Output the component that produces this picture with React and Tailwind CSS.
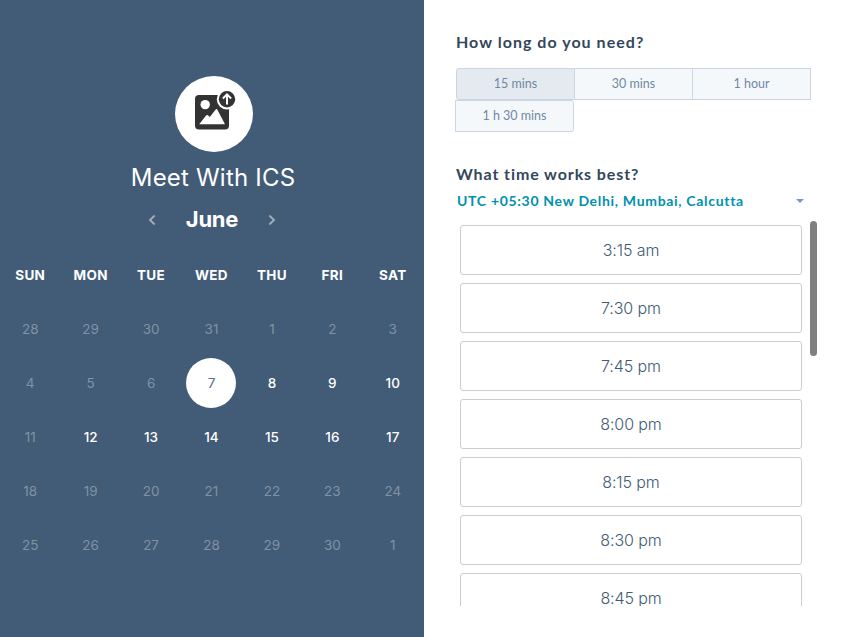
import React from "react";

const WEEKDAYS = ["SUN", "MON", "TUE", "WED", "THU", "FRI", "SAT"];

const DAYS = [
  28, 29, 30, 31, 1, 2, 3,
  4, 5, 6, 7, 8, 9, 10,
  11, 12, 13, 14, 15, 16, 17,
  18, 19, 20, 21, 22, 23, 24,
  25, 26, 27, 28, 29, 30, 1,
];
const SELECTED = 10;
const OPEN = [11, 12, 13, 15, 16, 17, 18, 19, 20];

const TIMES = ["3:15 am", "7:30 pm", "7:45 pm", "8:00 pm", "8:15 pm", "8:30 pm", "8:45 pm"];

function dayClass(i) {
  if (i === SELECTED) return "bg-white text-[#516f90]";
  if (OPEN.includes(i)) return "text-white font-medium";
  return "text-[#8192a4]";
}

function UploadImageIcon() {
  return (
    <svg width="42" height="42" viewBox="0 0 42 42" fill="none">
      <rect x="1" y="5" width="34" height="34.5" rx="4" fill="#333333" />
      <circle cx="11.2" cy="14.6" r="4.7" fill="white" />
      <path d="M5.2 34.2L12.3 25.3Q13 24.5 13.9 25.3L15.8 27L21.7 19.5Q22.6 18.6 23.4 19.8L31 34.2Z" fill="white" />
      <circle cx="33" cy="9.2" r="10.2" fill="white" />
      <circle cx="33" cy="9.2" r="8.2" fill="#333333" />
      <path d="M33 14.5V4.7M28.9 8.5L33 4.4L37.1 8.5" stroke="white" strokeWidth="2" />
    </svg>
  );
}

function Calendar() {
  return (
    <section className="flex h-full w-[424px] shrink-0 flex-col items-center bg-[#425b76] pt-[76px]">
      <div className="mr-[-4px] flex h-[76px] w-[78px] items-center justify-center rounded-[50%] bg-white">
        <div className="mb-[6px] ml-[1px] h-[42px] w-[42px]">
          <UploadImageIcon />
        </div>
      </div>
      <h1 className="mt-2 ml-[2px] whitespace-nowrap text-[24px] leading-[36px] tracking-[0.2px] text-white">Meet With ICS</h1>
      <div className="mt-[7px] flex h-8 items-center">
        <svg className="mt-px" width="8" height="12" viewBox="0 0 8 12" fill="none" stroke="#a0adba" strokeWidth="1.9">
          <path d="M6.7 1.5L2 6L6.7 10.5" />
        </svg>
        <h2 className="w-[112px] text-center text-[22px] leading-8 font-bold tracking-[-0.2px] text-white">June</h2>
        <svg className="mt-px" width="8" height="12" viewBox="0 0 8 12" fill="none" stroke="#a0adba" strokeWidth="1.9">
          <path d="M1.3 1.5L6 6L1.3 10.5" />
        </svg>
      </div>
      <div className="mt-[13px] grid w-[423px] grid-cols-7 self-start text-center text-[13.5px] leading-[54px] font-bold tracking-[0.3px] text-white">
        {WEEKDAYS.map((d) => <div key={d}>{d}</div>)}
      </div>
      <div className="grid w-[423px] grid-cols-7 self-start">
        {DAYS.map((d, i) => (
          <div key={i} className="flex h-[54px] items-center justify-center">
            <div className={"flex h-[50px] w-[50px] items-center justify-center rounded-full text-[13.5px] " + dayClass(i)}>{d}</div>
          </div>
        ))}
      </div>
    </section>
  );
}

function Durations() {
  return (
    <div className="mt-[15px] text-center font-['Lato',sans-serif] text-[12.5px] leading-[30px] text-[#6f88a6]">
      <div className="flex">
        <div className="w-[119px] rounded-l-[3px] border border-[#cbd6e2] bg-[#e5eaf0]">15 mins</div>
        <div className="w-[118px] border-y border-r border-[#cbd6e2] bg-[#f5f8fa]">30 mins</div>
        <div className="w-[118px] border-y border-r border-[#cbd6e2] bg-[#f5f8fa]">1 hour</div>
      </div>
      <div className="ml-[-1px] w-[119px] rounded-r-[3px] border border-[#cbd6e2] bg-[#f5f8fa]">1 h 30 mins</div>
    </div>
  );
}

export default function App() {
  return (
    <main className="flex h-[637px] w-[849px] overflow-hidden bg-white font-['Inter',sans-serif]">
      <Calendar />
      <section className="flex min-w-0 flex-1 flex-col pt-[31px] pl-8">
        <h3 className="font-['Lato',sans-serif] text-[16px] leading-[22px] font-bold tracking-[1.03px] text-[#33475b]">How long do you need?</h3>
        <Durations />
        <h3 className="mt-[31px] font-['Lato',sans-serif] text-[16px] leading-[22px] font-bold tracking-[0.9px] text-[#33475b]">What time works best?</h3>
        <div className="mt-[6px] ml-[1px] flex h-5 w-[347px] items-center justify-between font-['Lato',sans-serif] text-[14px] leading-5 font-bold tracking-[0.69px] text-[#0091ae]">
          <span>UTC +05:30 New Delhi, Mumbai, Calcutta</span>
          <svg width="8" height="4" viewBox="0 0 8 4"><path d="M0 0H8L4 4Z" fill="#7c98b6" /></svg>
        </div>
        <div className="mt-[10px] flex h-[385px] items-start overflow-hidden">
          <div className="ml-1 flex w-[342px] flex-col gap-2 pt-1">
            {TIMES.map((t) => (
              <button key={t} className="h-[50px] shrink-0 rounded-[3px] border border-[#cccccc] bg-white text-center text-[16px] font-light tracking-[-0.1px] text-[#425b76]">{t}</button>
            ))}
          </div>
          <div className="ml-2 h-[135px] w-[7px] rounded-full bg-[#808080]" />
        </div>
      </section>
    </main>
  );
}
